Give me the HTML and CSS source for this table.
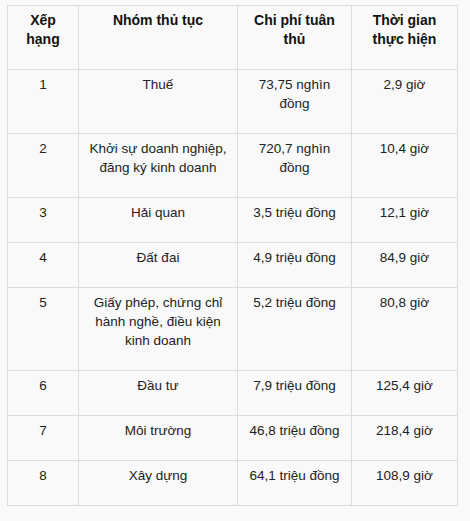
FILE: index.html
```html
<!DOCTYPE html>
<html lang="vi">
<head>
<meta charset="utf-8">
<link rel="stylesheet" href="styles.css">
</head>
<body>
<table class="rank">
  <colgroup>
    <col class="c1"><col class="c2"><col class="c3"><col class="c4">
  </colgroup>
  <thead>
    <tr><th>Xếp hạng</th><th>Nhóm thủ tục</th><th>Chi phí tuân thủ</th><th>Thời gian thực hiện</th></tr>
  </thead>
  <tbody>
    <tr><td>1</td><td>Thuế</td><td>73,75 nghìn đồng</td><td>2,9 giờ</td></tr>
    <tr><td>2</td><td>Khởi sự doanh nghiệp, đăng ký kinh doanh</td><td>720,7 nghìn đồng</td><td>10,4 giờ</td></tr>
    <tr><td>3</td><td>Hải quan</td><td>3,5 triệu đồng</td><td>12,1 giờ</td></tr>
    <tr><td>4</td><td>Đất đai</td><td>4,9 triệu đồng</td><td>84,9 giờ</td></tr>
    <tr><td>5</td><td>Giấy phép, chứng chỉ hành nghề, điều kiện kinh doanh</td><td>5,2 triệu đồng</td><td>80,8 giờ</td></tr>
    <tr><td>6</td><td>Đầu tư</td><td>7,9 triệu đồng</td><td>125,4 giờ</td></tr>
    <tr><td>7</td><td>Môi trường</td><td>46,8 triệu đồng</td><td>218,4 giờ</td></tr>
    <tr><td>8</td><td>Xây dựng</td><td>64,1 triệu đồng</td><td>108,9 giờ</td></tr>
  </tbody>
</table>
</body>
</html>
```
FILE: styles.css
```css
html, body {
  margin: 0;
  background: #f9f9f9;
}
body {
  padding: 5px 0 0 7px;
  font-family: Arial, "Liberation Sans", sans-serif;
  font-size: 13.5px;
  color: #222;
}
.rank {
  border-collapse: collapse;
  width: 450px;
  table-layout: fixed;
}
.c1 { width: 71px; }
.c2 { width: 159px; }
.c3 { width: 114px; }
.c4 { width: 106px; }
.rank th, .rank td {
  border: 1px solid #dcdcdc;
  padding: 5px 8px 20px;
  line-height: 19px;
  text-align: center;
  vertical-align: top;
}
.rank th {
  font-weight: bold;
  font-size: 14px;
  color: #111;
}
```
